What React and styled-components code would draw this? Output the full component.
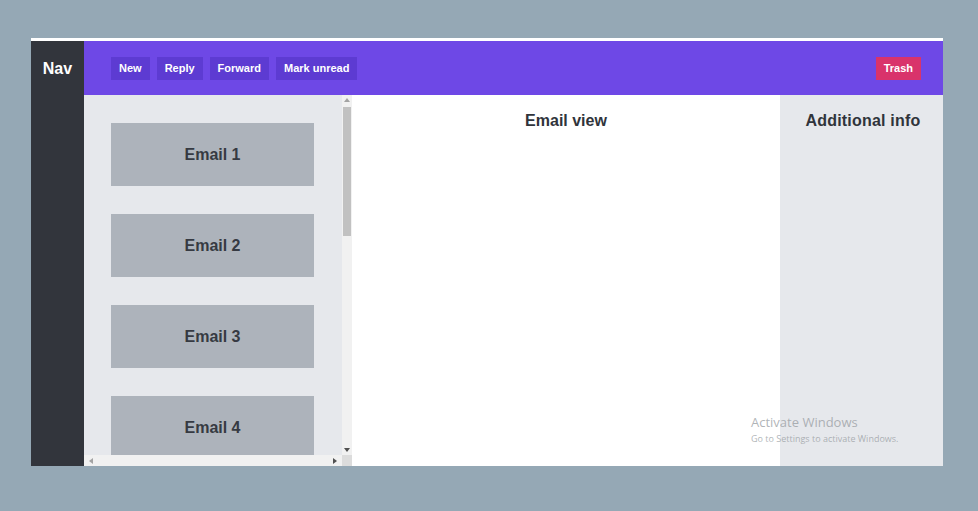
import React from "react";
import styled, { createGlobalStyle } from "styled-components";

const GlobalStyle = createGlobalStyle`
  html, body {
    margin: 0;
    padding: 0;
    background: #95a8b5;
    font-family: "Liberation Sans", Arial, sans-serif;
  }
`;

const emails = ["Email 1", "Email 2", "Email 3", "Email 4"];
const actions = ["New", "Reply", "Forward", "Mark unread"];

// the list's scrollbars are drawn by hand so they show up like in the screenshot
const Arrow = ({ dir }) => {
  const pts = {
    up: "1,5 4,1 7,5",
    down: "1,1 4,5 7,1",
    left: "5,1 1,4 5,7",
    right: "1,1 5,4 1,7",
  }[dir];
  const w = dir === "up" || dir === "down" ? 8 : 6;
  const h = dir === "up" || dir === "down" ? 6 : 8;
  return (
    <svg width={w} height={h} viewBox={`0 0 ${w} ${h}`}>
      <polygon points={pts} fill={dir === "up" || dir === "left" ? "#a3a3a3" : "#505050"} />
    </svg>
  );
};

const App = () => {
  return (
    <>
      <GlobalStyle />
      <Page>
        <Frame>
          <Nav>Nav</Nav>
          <Main>
            <Toolbar>
              <Actions>
                {actions.map((a) => (
                  <ToolButton key={a}>{a}</ToolButton>
                ))}
              </Actions>
              <ToolButton $danger>Trash</ToolButton>
            </Toolbar>
            <Content>
              <ListColumn>
                <ListBody>
                  <EmailList>
                    {emails.map((e) => (
                      <EmailCard key={e}>{e}</EmailCard>
                    ))}
                  </EmailList>
                  <VScroll>
                    <ArrowBox>
                      <Arrow dir="up" />
                    </ArrowBox>
                    <VThumb />
                    <Spacer />
                    <ArrowBox>
                      <Arrow dir="down" />
                    </ArrowBox>
                  </VScroll>
                </ListBody>
                <HScroll>
                  <HTrack>
                    <Arrow dir="left" />
                    <Arrow dir="right" />
                  </HTrack>
                  <Corner />
                </HScroll>
              </ListColumn>
              <EmailView>
                <Heading>Email view</Heading>
              </EmailView>
              <Info>
                <Heading $wide>Additional info</Heading>
              </Info>
            </Content>
          </Main>
          <Watermark>
            <WatermarkTitle>Activate Windows</WatermarkTitle>
            <WatermarkSub>Go to Settings to activate Windows.</WatermarkSub>
          </Watermark>
        </Frame>
      </Page>
    </>
  );
};

export default App;

const Page = styled.div`
  width: 978px;
  height: 511px;
  padding: 38px 0 0 31px;
  box-sizing: border-box;
`;

const Frame = styled.div`
  position: relative;
  width: 912px;
  height: 428px;
  border-top: 3px solid #ffffff;
  box-sizing: border-box;
  display: flex;
  background: #ffffff;
`;

const Nav = styled.div`
  width: 53px;
  flex-shrink: 0;
  background: #32353c;
  color: #ffffff;
  font-weight: 700;
  font-size: 16px;
  text-align: center;
  padding-top: 19px;
  box-sizing: border-box;
`;

const Main = styled.div`
  flex: 1;
  display: flex;
  flex-direction: column;
  min-width: 0;
`;

const Toolbar = styled.div`
  height: 54px;
  flex-shrink: 0;
  background: #6e48e6;
  display: flex;
  align-items: center;
  justify-content: space-between;
  padding: 0 22px 0 27px;
`;

const Actions = styled.div`
  display: flex;
  gap: 7px;
`;

const ToolButton = styled.button`
  height: 23px;
  border: none;
  padding: 0 8px;
  background: ${(p) => (p.$danger ? "#d9336b" : "#5d3bd2")};
  color: #ffffff;
  font-family: "Liberation Sans", Arial, sans-serif;
  font-weight: 700;
  font-size: 11px;
  cursor: pointer;
`;

const Content = styled.div`
  flex: 1;
  display: flex;
  min-height: 0;
`;

const ListColumn = styled.div`
  width: 268px;
  flex-shrink: 0;
  display: flex;
  flex-direction: column;
  background: #e6e8ec;
`;

const ListBody = styled.div`
  flex: 1;
  display: flex;
  min-height: 0;
`;

const EmailList = styled.div`
  flex: 1;
  overflow: hidden;
  padding: 28px 0 0 27px;
  display: flex;
  flex-direction: column;
  gap: 28px;
`;

const EmailCard = styled.div`
  width: 203px;
  height: 63px;
  flex-shrink: 0;
  background: #adb3bb;
  color: #363a42;
  font-weight: 700;
  font-size: 16px;
  display: flex;
  align-items: center;
  justify-content: center;
`;

const VScroll = styled.div`
  width: 10px;
  flex-shrink: 0;
  background: #f1f1f1;
  display: flex;
  flex-direction: column;
  align-items: center;
`;

const ArrowBox = styled.div`
  height: 10px;
  display: flex;
  align-items: center;
  justify-content: center;
`;

const VThumb = styled.div`
  width: 8px;
  height: 129px;
  margin-top: 2px;
  background: #c1c1c1;
`;

const Spacer = styled.div`
  flex: 1;
`;

const HScroll = styled.div`
  height: 11px;
  flex-shrink: 0;
  display: flex;
`;

const HTrack = styled.div`
  flex: 1;
  background: #f1f1f1;
  display: flex;
  align-items: center;
  justify-content: space-between;
  padding: 0 4px;
`;

const Corner = styled.div`
  width: 10px;
  background: #dcdcdc;
`;

const EmailView = styled.div`
  flex: 1;
  background: #ffffff;
  padding-top: 17px;
  text-align: center;
`;

const Info = styled.div`
  width: 163px;
  flex-shrink: 0;
  background: #e6e8ec;
  padding-top: 17px;
  text-align: center;
`;

const Heading = styled.div`
  font-weight: 700;
  font-size: 16px;
  letter-spacing: ${(p) => (p.$wide ? "0.2px" : "0")};
  padding-left: ${(p) => (p.$wide ? "3px" : "0")};
  color: #30343b;
`;

const Watermark = styled.div`
  position: absolute;
  left: 720px;
  top: 372px;
  pointer-events: none;
  font-family: "Open Sans", "DejaVu Sans", sans-serif;
  color: rgba(150, 155, 160, 0.75);
`;

const WatermarkTitle = styled.div`
  font-size: 13px;
`;

const WatermarkSub = styled.div`
  font-size: 9px;
  margin-top: 1px;
`;
